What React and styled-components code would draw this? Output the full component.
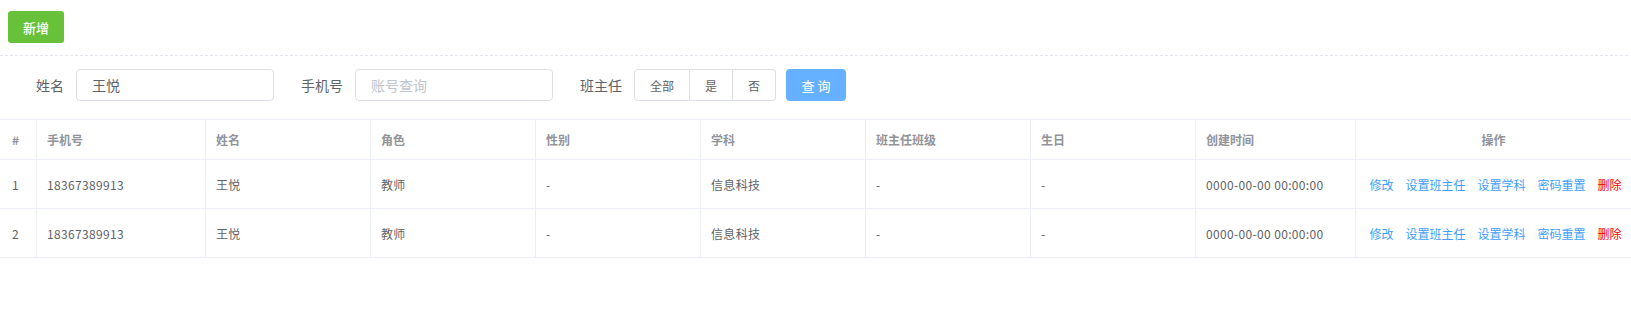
import React, { useState } from 'react';
import styled, { createGlobalStyle } from 'styled-components';

const GlobalStyle = createGlobalStyle`
  html, body {
    margin: 0;
    padding: 0;
    background: #fff;
  }
  body {
    font-family: "Noto Sans CJK SC", "Liberation Sans", sans-serif;
    color: #606266;
  }
  * {
    box-sizing: border-box;
  }
`;

const columns = [
  { key: 'index', title: '#', width: 37, first: true },
  { key: 'phone', title: '手机号', width: 169 },
  { key: 'name', title: '姓名', width: 165 },
  { key: 'role', title: '角色', width: 165 },
  { key: 'gender', title: '性别', width: 165 },
  { key: 'subject', title: '学科', width: 165 },
  { key: 'klass', title: '班主任班级', width: 165 },
  { key: 'birthday', title: '生日', width: 165 },
  { key: 'created', title: '创建时间', width: 160 },
  { key: 'actions', title: '操作', width: 275, center: true },
];

const rows = [
  {
    id: 1,
    phone: '18367389913',
    name: '王悦',
    role: '教师',
    gender: '-',
    subject: '信息科技',
    klass: '-',
    birthday: '-',
    created: '0000-00-00 00:00:00',
  },
  {
    id: 2,
    phone: '18367389913',
    name: '王悦',
    role: '教师',
    gender: '-',
    subject: '信息科技',
    klass: '-',
    birthday: '-',
    created: '0000-00-00 00:00:00',
  },
];

const actions = [
  { label: '修改' },
  { label: '设置班主任' },
  { label: '设置学科' },
  { label: '密码重置' },
  { label: '删除', danger: true },
];

const headTeacherOptions = [
  { value: 'all', label: '全部' },
  { value: 'yes', label: '是' },
  { value: 'no', label: '否' },
];

const App = () => {
  const [name, setName] = useState('王悦');
  const [phone, setPhone] = useState('');
  const [headTeacher, setHeadTeacher] = useState('all');

  return (
    <Page>
      <GlobalStyle />
      <Toolbar>
        <AddButton>新增</AddButton>
      </Toolbar>
      <SearchForm onSubmit={e => e.preventDefault()}>
        <FormItem>
          <Label>姓名</Label>
          <TextInput value={name} onChange={e => setName(e.target.value)} />
        </FormItem>
        <FormItem>
          <Label>手机号</Label>
          <TextInput
            placeholder="账号查询"
            value={phone}
            onChange={e => setPhone(e.target.value)}
          />
        </FormItem>
        <FormItem>
          <Label>班主任</Label>
          <RadioGroup>
            {headTeacherOptions.map(opt => (
              <RadioButton
                key={opt.value}
                type="button"
                onClick={() => setHeadTeacher(opt.value)}
              >
                {opt.label}
              </RadioButton>
            ))}
          </RadioGroup>
        </FormItem>
        <QueryButton type="submit">查 询</QueryButton>
      </SearchForm>
      <Table>
        <colgroup>
          {columns.map(col => (
            <col key={col.key} style={{ width: col.width }} />
          ))}
        </colgroup>
        <thead>
          <tr>
            {columns.map((col, i) => (
              <Th
                key={col.key}
                $first={col.first}
                $center={col.center}
                $last={i === columns.length - 1}
              >
                {col.title}
              </Th>
            ))}
          </tr>
        </thead>
        <tbody>
          {rows.map(row => (
            <tr key={row.id}>
              <Td $first>{row.id}</Td>
              <Td>{row.phone}</Td>
              <Td>{row.name}</Td>
              <Td>{row.role}</Td>
              <Td>{row.gender}</Td>
              <Td>{row.subject}</Td>
              <Td>{row.klass}</Td>
              <Td>{row.birthday}</Td>
              <Td>{row.created}</Td>
              <Td $last $center>
                <Actions>
                  {actions.map(a => (
                    <ActionLink key={a.label} $danger={a.danger}>
                      {a.label}
                    </ActionLink>
                  ))}
                </Actions>
              </Td>
            </tr>
          ))}
        </tbody>
      </Table>
    </Page>
  );
};

const Page = styled.div`
  width: 1631px;
`;

const Toolbar = styled.div`
  display: flex;
  padding: 11px 8px 13px;
  background-image: repeating-linear-gradient(
    to right,
    #e4e7ed 0,
    #e4e7ed 3px,
    transparent 3px,
    transparent 5px
  );
  background-size: 100% 1px;
  background-position: left bottom;
  background-repeat: no-repeat;
`;

const AddButton = styled.button`
  height: 32px;
  padding: 0 15px;
  border: none;
  border-radius: 3px;
  background: #67c23a;
  color: #fff;
  font-family: inherit;
  font-size: 13px;
  font-weight: 500;
  cursor: pointer;
`;

const SearchForm = styled.form`
  display: flex;
  align-items: center;
  gap: 27px;
  padding: 13px 0 18px 36px;
  margin: 0;
`;

const FormItem = styled.div`
  display: flex;
  align-items: center;
  gap: 12px;
`;

const Label = styled.label`
  font-size: 14px;
  color: #606266;
  line-height: 32px;
`;

const TextInput = styled.input`
  width: 198px;
  height: 32px;
  padding: 0 15px;
  border: 1px solid #dcdfe6;
  border-radius: 4px;
  font-family: inherit;
  font-size: 14px;
  color: #606266;
  outline: none;
  &::placeholder {
    color: #c0c4cc;
  }
`;

const RadioGroup = styled.div`
  display: flex;
`;

const RadioButton = styled.button`
  height: 32px;
  padding: 0 15px;
  border: 1px solid #dcdfe6;
  border-left: none;
  background: #fff;
  color: #606266;
  font-family: inherit;
  font-size: 12px;
  cursor: pointer;
  &:first-child {
    border-left: 1px solid #dcdfe6;
    border-radius: 4px 0 0 4px;
  }
  &:last-child {
    border-radius: 0 4px 4px 0;
  }
`;

const QueryButton = styled.button`
  height: 32px;
  width: 60px;
  margin-left: -17px;
  border: none;
  border-radius: 4px;
  background: #66b1ff;
  color: #fff;
  font-family: inherit;
  font-size: 13px;
  cursor: pointer;
`;

const Table = styled.table`
  width: 1631px;
  table-layout: fixed;
  border-collapse: separate;
  border-spacing: 0;
  border-top: 1px solid #ebeef5;
  font-size: 12px;
`;

const Th = styled.th`
  height: 40px;
  padding: 0 ${props => (props.$first ? '12px' : '10px')};
  text-align: ${props => (props.$center ? 'center' : 'left')};
  font-weight: 700;
  color: #909399;
  border-bottom: 1px solid #ebeef5;
  border-right: ${props => (props.$last ? 'none' : '1px solid #ebeef5')};
  white-space: nowrap;
`;

const Td = styled.td`
  height: 49px;
  padding: 0 ${props => (props.$first ? '12px' : '10px')};
  text-align: ${props => (props.$center ? 'center' : 'left')};
  color: #606266;
  letter-spacing: 0.35px;
  border-bottom: 1px solid #ebeef5;
  border-right: ${props => (props.$last ? 'none' : '1px solid #ebeef5')};
  white-space: nowrap;
`;

const Actions = styled.div`
  display: flex;
  justify-content: center;
  gap: 12px;
  padding-left: 4px;
  letter-spacing: 0;
`;

const ActionLink = styled.a`
  color: ${props => (props.$danger ? '#f00' : '#409eff')};
  cursor: pointer;
`;

export default App;
